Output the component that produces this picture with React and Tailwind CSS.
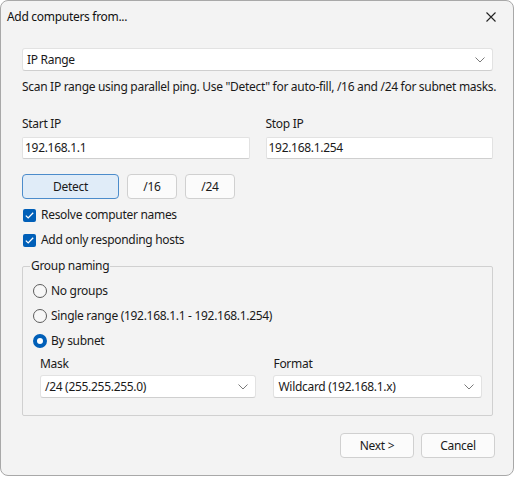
import React from 'react';

const font = { fontFamily: '"Segoe UI", "Noto Sans", sans-serif' };

function Chevron() {
  return (
    <svg width="10" height="6" viewBox="0 0 10 6" className="shrink-0">
      <path d="M0.5 0.5 L5 5 L9.5 0.5" fill="none" stroke="#7a7a7a" strokeWidth="1" />
    </svg>
  );
}

function Select({ value, className = '' }) {
  return (
    <div className={`flex items-center justify-between h-[23px] bg-white border border-[#e2e2e2] border-b-[#cfcfcf] rounded-[3px] pl-[4px] pr-[7px] ${className}`}>
      <span>{value}</span>
      <Chevron />
    </div>
  );
}

function Field({ label, value }) {
  return (
    <div className="flex flex-col flex-1">
      <div className="h-[16px] leading-[16px] mb-[5px]">{label}</div>
      <div className="h-[22px] bg-white border border-[#e2e2e2] border-b-[#cfcfcf] rounded-[2px] pl-[2px] flex items-center">{value}</div>
    </div>
  );
}

function Btn({ children, className = '' }) {
  return (
    <div className={`flex items-center justify-center h-[25px] rounded-[4px] border ${className}`}>{children}</div>
  );
}

function Check({ label, className = '' }) {
  return (
    <div className={`flex items-center h-[16px] ${className}`}>
      <div className="w-[13px] h-[13px] ml-[1px] mr-[5px] rounded-[2px] bg-[#005fb8] flex items-center justify-center">
        <svg width="9" height="7" viewBox="0 0 9 7">
          <path d="M0.8 3.6 L3.2 5.9 L8.2 0.8" fill="none" stroke="white" strokeWidth="1.3" />
        </svg>
      </div>
      <span>{label}</span>
    </div>
  );
}

function Radio({ label, checked }) {
  return (
    <div className="flex items-center h-[16px]">
      {checked ? (
        <div className="w-[14px] h-[14px] rounded-full border-[4px] border-[#005fb8] bg-white mr-[4px]" />
      ) : (
        <div className="w-[14px] h-[14px] rounded-full border border-[#5c5c5c] bg-[#f7f7f7] mr-[4px]" />
      )}
      <span>{label}</span>
    </div>
  );
}

export default function App() {
  return (
    <div className="w-[516px] h-[478px] bg-white text-[12px] tracking-[-0.3px] text-[#1a1a1a] whitespace-nowrap" style={font}>
      <div className="w-[514px] h-[476px] bg-[#f3f3f3] border border-[#a8a8a8] rounded-[8px] flex flex-col overflow-hidden">
        <div className="h-[31px] flex items-center justify-between pl-[6px] pr-[17px]">
          <span className="text-[#111]">Add computers from...</span>
          <svg width="10" height="10" viewBox="0 0 10 10">
            <path d="M0.5 0.5 L9.5 9.5 M9.5 0.5 L0.5 9.5" stroke="#222" strokeWidth="1.1" />
          </svg>
        </div>

        <div className="flex flex-col pl-[21px] pr-[20px] pt-[16px]">
          <Select value="IP Range" />
          <div className="mt-[8px] h-[16px] leading-[16px]">Scan IP range using parallel ping. Use "Detect" for auto-fill, /16 and /24 for subnet masks.</div>

          <div className="flex gap-[16px] mt-[21px]">
            <Field label="Start IP" value="192.168.1.1" />
            <Field label="Stop IP" value="192.168.1.254" />
          </div>

          <div className="flex gap-[8px] mt-[15px]">
            <Btn className="w-[97px] bg-[#e0ecf8] border-[#4c8ccb]">Detect</Btn>
            <Btn className="w-[50px] bg-[#fbfbfb] border-[#d0d0d0]">/16</Btn>
            <Btn className="w-[50px] bg-[#fbfbfb] border-[#d0d0d0]">/24</Btn>
          </div>

          <Check label="Resolve computer names" className="mt-[8px]" />
          <Check label="Add only responding hosts" className="mt-[9px]" />

          <div className="relative mt-[18px] h-[150px] border border-[#d0d0d0] rounded-[2px] px-[10px] pt-[16px]">
            <div className="absolute left-[7px] top-[-9px] px-[1px] bg-[#f3f3f3] leading-[16px]">Group naming</div>
            <div className="flex flex-col gap-[9px]">
              <Radio label="No groups" />
              <Radio label="Single range (192.168.1.1 - 192.168.1.254)" />
              <Radio label="By subnet" checked />
            </div>
            <div className="flex gap-[17px] mt-[7px] pl-[7px]">
              <div className="flex flex-col w-[217px]">
                <div className="h-[16px] leading-[16px] mb-[3px]">Mask</div>
                <Select value="/24 (255.255.255.0)" />
              </div>
              <div className="flex flex-col w-[209px]">
                <div className="h-[16px] leading-[16px] mb-[3px]">Format</div>
                <Select value="Wildcard (192.168.1.x)" />
              </div>
            </div>
          </div>

          <div className="flex justify-end gap-[7px] mt-[17px] mr-[-2px]">
            <Btn className="w-[74px] h-[24px] bg-[#fbfbfb] border-[#d0d0d0]">Next &gt;</Btn>
            <Btn className="w-[74px] h-[24px] bg-[#fbfbfb] border-[#d0d0d0]">Cancel</Btn>
          </div>
        </div>
      </div>
    </div>
  );
}
